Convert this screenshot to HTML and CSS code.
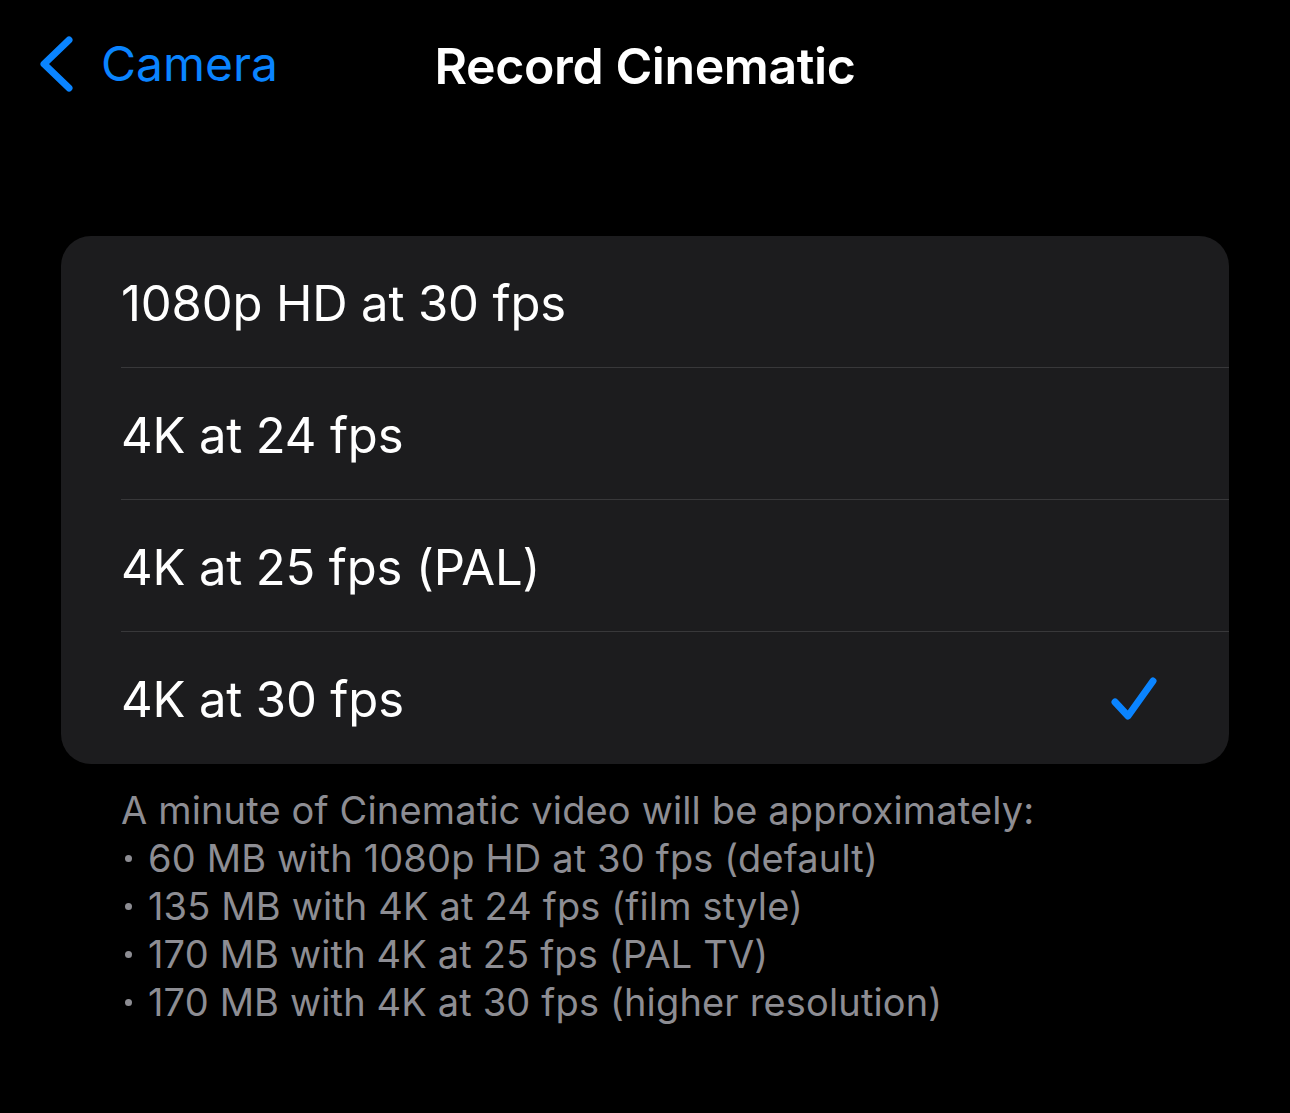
FILE: index.html
```html
<!DOCTYPE html>
<html>
<head>
<meta charset="utf-8">
<link rel="stylesheet" href="styles.css">
</head>
<body>
<div class="nav">
  <div class="back">
    <svg class="chev" width="40" height="60" viewBox="0 0 40 60"><path d="M33 6 L8 30 L33 54" fill="none" stroke="#0a84ff" stroke-width="7" stroke-linecap="round" stroke-linejoin="round"/></svg>
    <span class="back-label">Camera</span>
  </div>
  <div class="title">Record Cinematic</div>
</div>
<div class="card">
  <div class="row"><span>1080p HD at 30 fps</span></div>
  <div class="row"><span>4K at 24 fps</span></div>
  <div class="row"><span>4K at 25 fps (PAL)</span></div>
  <div class="row last"><span>4K at 30 fps</span>
    <svg class="check" width="50" height="50" viewBox="0 0 50 50"><path d="M5 25 L18 39 L43 4" fill="none" stroke="#0a84ff" stroke-width="7" stroke-linecap="round" stroke-linejoin="round"/></svg>
  </div>
</div>
<div class="footer">
  <div>A minute of Cinematic video will be approximately:</div>
  <div><span class="dot"></span>60 MB with 1080p HD at 30 fps (default)</div>
  <div><span class="dot"></span>135 MB with 4K at 24 fps (film style)</div>
  <div><span class="dot"></span>170 MB with 4K at 25 fps (PAL TV)</div>
  <div><span class="dot"></span>170 MB with 4K at 30 fps (higher resolution)</div>
</div>
</body>
</html>
```
FILE: styles.css
```css
html, body {
  margin: 0;
  background: #000;
  height: 100%;
}
body {
  font-family: Inter, "Noto Sans", sans-serif;
  color: #fff;
  -webkit-font-smoothing: antialiased;
}
.nav {
  position: relative;
  height: 132px;
  display: flex;
  align-items: center;
  justify-content: center;
}
.back {
  position: absolute;
  left: 36px;
  top: 34px;
  display: flex;
  align-items: center;
  gap: 25px;
  color: #0a84ff;
}
.chev { display: block; }
.back-label {
  font-size: 48px;
  letter-spacing: 0;
  margin-top: -2px;
}
.title {
  font-size: 50px;
  font-weight: 600;
  letter-spacing: -0.4px;
}
.card {
  margin: 104px 61px 0 61px;
  background: #1c1c1e;
  border-radius: 30px;
  overflow: hidden;
}
.row {
  box-sizing: border-box;
  height: 132px;
  padding-top: 3px;
  margin-left: 60px;
  padding-right: 69px;
  display: flex;
  align-items: center;
  justify-content: space-between;
  font-size: 49px;
  letter-spacing: -0.15px;
  border-bottom: 1px solid #38383a;
}
.row.last { border-bottom: none; height: 132px; }
.check { display: block; margin-top: 5px; }
.footer {
  margin: 22px 0 0 121px;
  color: #8d8d93;
  font-size: 38px;
  line-height: 48px;
  letter-spacing: 0.15px;
}
.dot {
  display: inline-block;
  width: 7px;
  height: 7px;
  border-radius: 50%;
  background: #8d8d93;
  margin: 0 16px 0 4px;
  vertical-align: 10px;
}
```
